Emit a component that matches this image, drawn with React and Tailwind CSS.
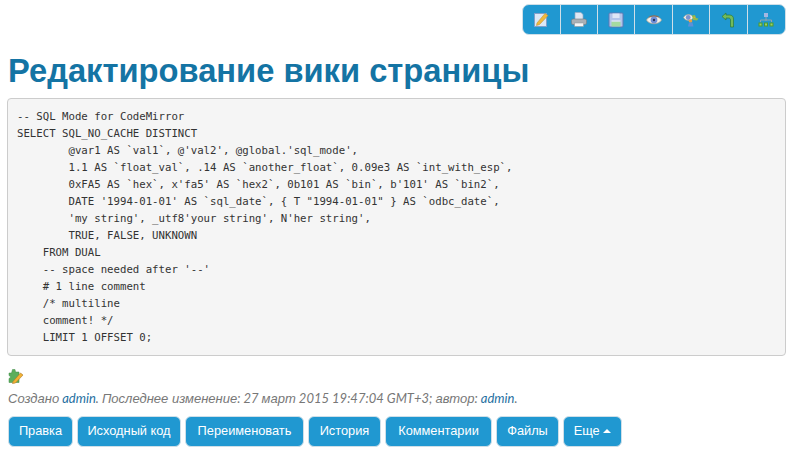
const sql = `-- SQL Mode for CodeMirror
SELECT SQL_NO_CACHE DISTINCT
        @var1 AS \`val1\`, @'val2', @global.'sql_mode',
        1.1 AS \`float_val\`, .14 AS \`another_float\`, 0.09e3 AS \`int_with_esp\`,
        0xFA5 AS \`hex\`, x'fa5' AS \`hex2\`, 0b101 AS \`bin\`, b'101' AS \`bin2\`,
        DATE '1994-01-01' AS \`sql_date\`, { T "1994-01-01" } AS \`odbc_date\`,
        'my string', _utf8'your string', N'her string',
        TRUE, FALSE, UNKNOWN
    FROM DUAL
    -- space needed after '--'
    # 1 line comment
    /* multiline
    comment! */
    LIMIT 1 OFFSET 0;`;

function EditIcon() {
  return (
    <svg width="16" height="16" viewBox="0 0 16 16">
      <rect x="1.5" y="1.5" width="12" height="13" fill="#dbe8f7" stroke="#7f9fcb" />
      <path d="M4 11 L12 1.5 L15 3.5 L6.5 12.5 L3.5 13.5 Z" fill="#f0b93c" stroke="#c2963a" strokeWidth="0.6" />
    </svg>
  );
}

function PrintIcon() {
  return (
    <svg width="16" height="16" viewBox="0 0 16 16">
      <path d="M4 0.5 H10 L12 2.5 V8 H4 Z" fill="#dfe7f3" stroke="#97a9c3" strokeWidth="0.7" />
      <rect x="0.5" y="7" width="15" height="5.5" rx="1.5" fill="#a9b0b6" stroke="#727a80" strokeWidth="0.6" />
      <rect x="3.5" y="11" width="9" height="3.5" fill="#f3f4f6" stroke="#8b9298" strokeWidth="0.5" />
    </svg>
  );
}

function SaveIcon() {
  return (
    <svg width="16" height="16" viewBox="0 0 16 16">
      <rect x="1" y="1" width="14" height="14" rx="1" fill="#b2c4ea" stroke="#5c78b4" />
      <rect x="4.5" y="1.5" width="7" height="4.5" fill="#dde6f6" />
      <rect x="3.5" y="9.5" width="9" height="5" fill="#a5dba0" />
      <rect x="3.5" y="8.5" width="9" height="1" fill="#f1f4fa" />
    </svg>
  );
}

function EyeIcon() {
  return (
    <svg width="16" height="16" viewBox="0 0 16 16">
      <path d="M0.5 8 C3 3 13 3 15.5 8 C13 13 3 13 0.5 8 Z" fill="#f4f1ea" stroke="#a89f92" strokeWidth="0.8" />
      <path d="M2 5.5 C5 2.5 11 2.5 14 5.5 C11 4.5 5 4.5 2 5.5 Z" fill="#8d6d55" />
      <circle cx="8" cy="8" r="3.4" fill="#6f8fd6" />
      <circle cx="8" cy="8" r="1.2" fill="#24345e" />
    </svg>
  );
}

function PreviewIcon() {
  return (
    <svg width="16" height="16" viewBox="0 0 16 16">
      <path d="M0.5 5.5 C2.5 1.5 8.5 1.5 10.5 5.5 C8.5 9.5 2.5 9.5 0.5 5.5 Z" fill="#efece6" stroke="#a89f92" strokeWidth="0.6" />
      <circle cx="5.2" cy="5.5" r="2.4" fill="#7c93cf" />
      <path d="M9 3.5 L12 3 L13 6 L15.5 6.5 L14 8.5 L10 8 Z" fill="#8cbc4e" />
      <path d="M10 5.5 L12 4.5 L12.5 6.5 Z" fill="#e9a23c" />
      <circle cx="7.5" cy="9" r="1.8" fill="#e9a23c" />
      <path d="M5 14.5 L6 10.5 L9.5 10.5 L10.5 14.5 Z" fill="#5d8fd8" />
    </svg>
  );
}

function BackIcon() {
  return (
    <svg width="16" height="16" viewBox="0 0 16 16">
      <path d="M2 4.5 L6 1 V3 H9.5 C12 3 13.5 4.5 13.5 7 V15 H10.5 V8 C10.5 7 10 6 8.5 6 H6 V8 Z" fill="#72bb5c" stroke="#2d7a35" strokeWidth="0.7" />
    </svg>
  );
}

function TreeIcon() {
  return (
    <svg width="16" height="16" viewBox="0 0 16 16">
      <rect x="6" y="1" width="4" height="4" fill="#a3b7e2" />
      <path d="M8 5 V9 M2.5 10 V8 H13.5 V10" fill="none" stroke="#8fa3ad" />
      <rect x="0.5" y="10.5" width="4" height="4" fill="#4f9a2c" />
      <rect x="1.5" y="11.5" width="2" height="2" fill="#9ad06a" />
      <rect x="6" y="10.5" width="4" height="4" fill="#4f9a2c" />
      <rect x="7" y="11.5" width="2" height="2" fill="#9ad06a" />
      <rect x="11.5" y="10.5" width="4" height="4" fill="#4f9a2c" />
      <rect x="12.5" y="11.5" width="2" height="2" fill="#9ad06a" />
    </svg>
  );
}

function PluginIcon() {
  return (
    <svg width="16" height="16" viewBox="0 0 16 16">
      <path d="M1 5 H3.5 L4.5 1.5 H7 L7.5 4 H11 V7.5 L9 9 L11 11 V14.5 H7.5 L6.5 12.5 L4.5 14.5 H1 V10.5 L3 9 L1 7.5 Z" fill="#5cae5c" stroke="#3f8a46" strokeWidth="0.5" />
      <path d="M5 13.5 L12.5 5 L15 7 L7.5 15 L4.5 15.5 Z" fill="#f2b233" stroke="#a9772a" strokeWidth="0.6" />
    </svg>
  );
}

const tools = [EditIcon, PrintIcon, SaveIcon, EyeIcon, PreviewIcon, BackIcon, TreeIcon];

const actions = [
  { label: "Правка", width: "w-[65px]" },
  { label: "Исходный код", width: "w-[104px]" },
  { label: "Переименовать", width: "w-[119px]" },
  { label: "История", width: "w-[73px]" },
  { label: "Комментарии", width: "w-[107px]" },
  { label: "Файлы", width: "w-[63px]" },
];

function Ru({ children }) {
  return <span className="font-['Liberation_Sans',sans-serif]">{children}</span>;
}

function ActionButton({ width, children }) {
  return (
    <button className={`${width} h-[31px] bg-[#2098d1] border border-[#cfdfe8] rounded-[6px] text-white text-[12.8px] leading-none whitespace-nowrap font-['Liberation_Sans',sans-serif]`}>
      {children}
    </button>
  );
}

export default function App() {
  return (
    <div className="w-[800px] h-[453px] overflow-hidden bg-white pl-[7px] pr-[14px] pt-[4px] font-['Lato',sans-serif] text-[14px] text-[#777]">
      {/* Toolbar */}
      <div className="flex justify-end">
        <div className="flex h-[31px] bg-[#2098d1] border border-[#cfdfe8] rounded-[7px]">
          {tools.map((Icon, i) => (
            <div
              key={i}
              className={`w-[37.4px] flex items-center justify-center ${i < tools.length - 1 ? "border-r border-[#cfdfe8]" : ""}`}
            >
              <Icon />
            </div>
          ))}
        </div>
      </div>

      <h1 className="mt-[11px] ml-[1px] h-[52px] text-[32.7px] leading-[49px] font-bold text-[#1474a4] font-['Liberation_Sans',sans-serif]">
        Редактирование вики страницы
      </h1>

      <pre className="h-[258px] px-[9px] pt-[9px] bg-[#f5f5f5] border border-[#ccc] rounded-[4px] text-[#333] text-[10.7px] leading-[17px] font-['DejaVu_Sans_Mono',monospace]">
        {sql}
      </pre>

      <div className="mt-[12px] ml-[1px] h-[16px]">
        <PluginIcon />
      </div>

      <p className="mt-[4px] ml-[1px] h-[20px] text-[13px] leading-[20px] italic">
        <Ru>Создано</Ru> <a className="text-[#1f6f9f]">admin</a>. <Ru>Последнее изменение</Ru>: 27 <Ru>март</Ru> 2015 19:47:04 GMT+3; <Ru>автор</Ru>: <a className="text-[#1f6f9f]">admin</a>.
      </p>

      <div className="mt-[8px] ml-[1px] flex gap-[4px]">
        {actions.map((a) => (
          <ActionButton key={a.label} width={a.width}>{a.label}</ActionButton>
        ))}
        <ActionButton width="w-[59px]">
          Еще <span className="inline-block align-middle mb-[2px] border-x-[4px] border-b-[4px] border-x-transparent border-b-white" />
        </ActionButton>
      </div>
    </div>
  );
}
